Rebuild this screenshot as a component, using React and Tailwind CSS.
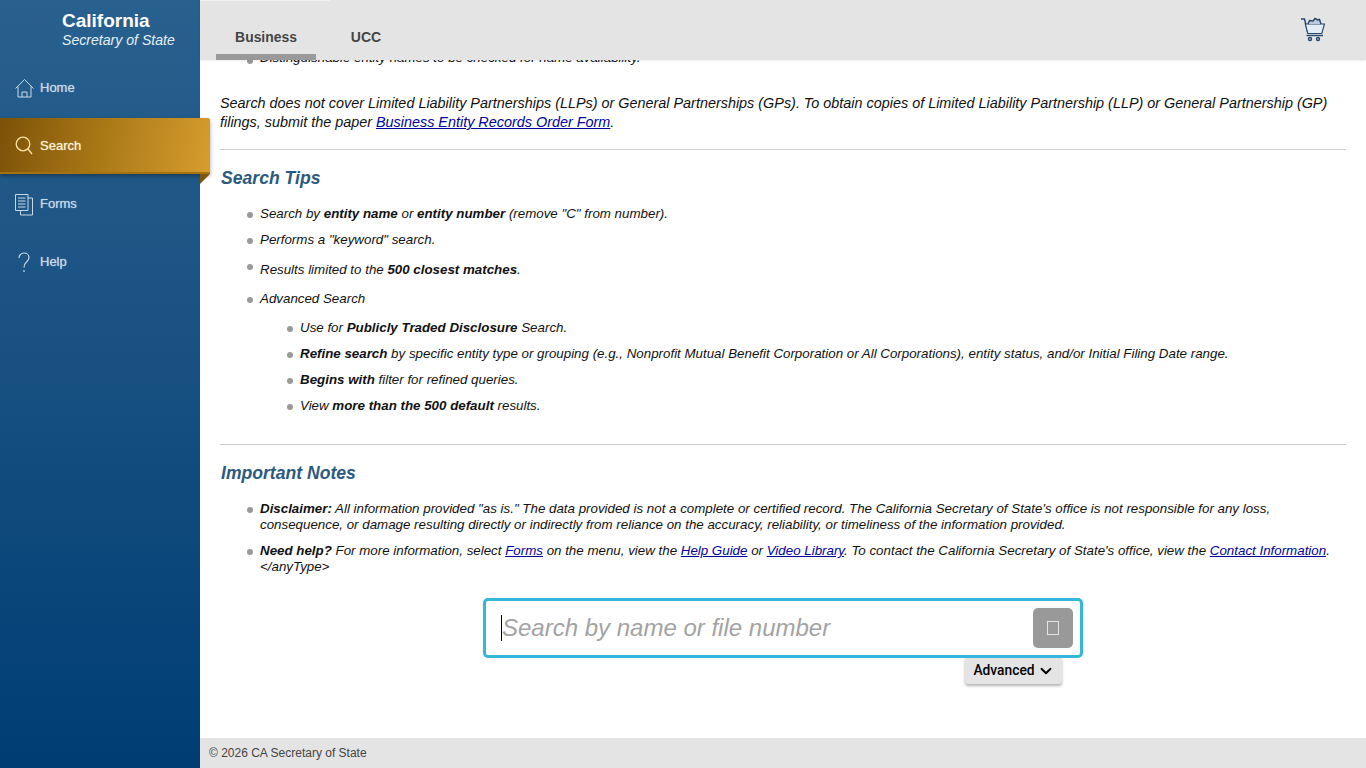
import React from 'react';
import { ChevronDown } from 'lucide-react';

const HomeIcon = () => (
    <svg width="20" height="20" viewBox="0 0 20 20" fill="none" stroke="currentColor" strokeWidth="1">
        <path d="M0.5 10.5 9.5 1.5l9 9" />
        <path d="M3 8.5v10.5h13V8.5" />
        <path d="M7 19v-5h5v5" />
    </svg>
);

const SearchIcon = () => (
    <svg width="20" height="20" viewBox="0 0 20 20" fill="none" stroke="currentColor" strokeWidth="1.3">
        <circle cx="8" cy="8" r="6.8" />
        <path d="M13 13 17 18" />
    </svg>
);

const FormsIcon = () => (
    <svg width="20" height="22" viewBox="0 0 20 22" fill="none" stroke="currentColor" strokeWidth="1">
        <path d="M0.5 0.5h12.5v16H0.5z" />
        <path d="M13 4h4.5v17H5.5v-4.5" />
        <path d="M3 4h7.5M3 7h7.5M3 10h7.5M3 13h7.5" />
    </svg>
);

const HelpIcon = () => (
    <svg width="20" height="22" viewBox="0 0 20 22" fill="none" stroke="currentColor" strokeWidth="1.2">
        <path d="M4 6c0-3 2.2-5 5-5s5 2 5 4.6c0 2-1 3.100-2.500 4.400S9 12.500 9 15.500" />
        <path d="M9 18v2" />
    </svg>
);

const CartIcon = () => (
    <svg width="26" height="28" viewBox="0 0 26 28" fill="none" stroke="#24466b" strokeWidth="1.4">
        <path d="M1 3h3.500l3.500 14.500" />
        <path d="M5.300 8H24.500l-2.700 9.500H7.800z" fill="#e3edf5" strokeWidth="1.100" />
        <path d="M8 8l1.500-3.500 3.500 0.500 2-2.500 3 1.500 1.500-0.500 1.500 4.500" fill="#b9c9da" />
        <path d="M6.500 19.500H23" />
        <circle cx="10" cy="23" r="1.500" />
        <circle cx="18" cy="23" r="1.500" />
    </svg>
);

const NavItem = ({ label, icon, active = false }) => {
    if (active) {
        return (
            <div className="relative h-[58px]">
                <div className="absolute left-0 top-0 w-[210px] h-[56px] rounded-tr-[2px] border-b-2 border-[#a8720f] flex items-center pl-[15px] pt-[2px] gap-[5px] bg-[linear-gradient(100deg,#7c5208,#ab7a17_50%,#d69c2e)] shadow-[0_2px_4px_rgba(0,0,0,0.35)] z-10">
                    <span className="w-[20px] h-[20px] text-[#fbe3a8]">{icon}</span>
                    <span className="text-[13px] text-[#fbf1d8] [text-shadow:0_0_1px_rgba(255,245,220,0.8)]">{label}</span>
                </div>
                <div className="absolute left-[200px] top-[56px] w-0 h-0 border-t-[10px] border-r-[10px] border-t-[#7c5610] border-r-transparent z-10" />
            </div>
        );
    }
    return (
        <div className="h-[58px] flex items-center pl-[15px] gap-[5px] text-[#c9d9e8] pb-[2px]">
            <span className="w-[20px] h-[20px]">{icon}</span>
            <span className="text-[13px] [text-shadow:0_0_1px_rgba(220,235,250,0.7)]">{label}</span>
        </div>
    );
};

const Bullet = ({ children, className = '', dot = 'top-[8px]' }) => (
    <li className={`relative pl-[40px] ${className}`}>
        <span className={`absolute left-[27px] ${dot} w-[6px] h-[6px] rounded-full bg-[#999999]`} />
        {children}
    </li>
);

const SubBullet = ({ children, className = '' }) => (
    <li className={`relative pl-[80px] ${className}`}>
        <span className="absolute left-[67px] top-[6px] w-[6px] h-[6px] rounded-full bg-[#999999]" />
        {children}
    </li>
);

const A = ({ children }) => <a href="#" className="text-[#0000a0] underline">{children}</a>;

const App = () => {
    return (
        <div className="h-screen flex overflow-hidden bg-white font-['Liberation_Sans',Arial,sans-serif]">
            <aside className="w-[200px] shrink-0 bg-gradient-to-b from-[#28618e] via-[#1c5585] via-35% to-[#003d73]">
                <div className="h-[60px] pl-[62px] pt-[10px] text-white">
                    <div className="text-[19px] leading-[22px] font-bold">California</div>
                    <div className="text-[14.1px] leading-[16px] italic text-[#e6eef5]">Secretary of State</div>
                </div>
                <nav>
                    <NavItem label="Home" icon={<HomeIcon />} />
                    <NavItem label="Search" icon={<SearchIcon />} active />
                    <NavItem label="Forms" icon={<FormsIcon />} />
                    <NavItem label="Help" icon={<HelpIcon />} />
                </nav>
            </aside>

            <div className="flex-1 min-w-0 flex flex-col">
                <header className="relative z-[5] h-[60px] shrink-0 bg-[#e4e4e4] flex items-start pl-[16px] pr-[40px] shadow-[0_1px_2px_rgba(0,0,0,0.08)]">
                    <div className="absolute left-0 top-0 w-[130px] h-[1px] bg-[#f0f0f0]" />
                    <div className="w-[100px] h-[60px] flex flex-col">
                        <div className="h-[54px] pt-[28px] text-center text-[13.9px] leading-[18px] font-bold text-[#444444]">Business</div>
                        <div className="w-full h-[6px] bg-[#999999]" />
                    </div>
                    <div className="w-[100px] h-[60px] pt-[28px] text-center text-[14px] leading-[18px] font-bold text-[#444444]">UCC</div>
                    <div className="ml-auto mt-[16px]">
                        <CartIcon />
                    </div>
                </header>

                <main className="relative flex-1 min-h-0 overflow-hidden">
                    <div className="pl-[20px] pr-[20px] text-[14.4px] italic text-[#111111] mt-[-10px]">
                        <ul className="text-[13.33px] leading-[16px]">
                            <Bullet>Distinguishable entity names to be checked for name availability.</Bullet>
                        </ul>

                        <p className="mt-[28px] leading-[19px]">
                            Search does not cover Limited Liability Partnerships (LLPs) or General Partnerships (GPs). To obtain copies of Limited Liability Partnership (LLP) or General Partnership (GP) filings, submit the paper <A>Business Entity Records Order Form</A>.
                        </p>

                        <hr className="mt-[17px] border-[#cccccc]" />
                        <h2 className="mt-[17px] pl-[1px] text-[17.6px] leading-[22px] font-bold text-[#2b5a80]">Search Tips</h2>

                        <ul className="mt-[17px] text-[13.33px] leading-[16px]">
                            <Bullet dot="top-[6px]">Search by <b>entity name</b> or <b>entity number</b> (remove "C" from number).</Bullet>
                            <Bullet className="mt-[10px]" dot="top-[6px]">Performs a "keyword" search.</Bullet>
                            <Bullet className="mt-[14px]" dot="top-[2px]">Results limited to the <b>500 closest matches</b>.</Bullet>
                            <Bullet className="mt-[13px]" dot="top-[6px]">Advanced Search</Bullet>
                        </ul>
                        <ul className="mt-[13px] text-[13.33px] leading-[16px]">
                            <SubBullet>Use for <b>Publicly Traded Disclosure</b> Search.</SubBullet>
                            <SubBullet className="mt-[10px]">
                                <b>Refine search</b> by specific entity type or grouping (e.g., Nonprofit Mutual Benefit Corporation or All Corporations), entity status, and/or Initial Filing Date range.
                            </SubBullet>
                            <SubBullet className="mt-[10px]"><b>Begins with</b> filter for refined queries.</SubBullet>
                            <SubBullet className="mt-[10px]">View <b>more than the 500 default</b> results.</SubBullet>
                        </ul>

                        <hr className="mt-[30px] border-[#cccccc]" />
                        <h2 className="mt-[17px] pl-[1px] text-[17.6px] leading-[22px] font-bold text-[#2b5a80]">Important Notes</h2>

                        <ul className="mt-[17px] text-[13.33px] leading-[16px]">
                            <Bullet dot="top-[6px]">
                                <b>Disclaimer:</b> All information provided "as is." The data provided is not a complete or certified record. The California Secretary of State's office is not responsible for any loss, consequence, or damage resulting directly or indirectly from reliance on the accuracy, reliability, or timeliness of the information provided.
                            </Bullet>
                            <Bullet className="mt-[10px]" dot="top-[6px]">
                                <b>Need help?</b> For more information, select <A>Forms</A> on the menu, view the <A>Help Guide</A> or <A>Video Library</A>. To contact the California Secretary of State's office, view the <A>Contact Information</A>. &lt;/anyType&gt;
                            </Bullet>
                        </ul>

                        <div className="mt-[23px] w-[600px] ml-[263px]">
                            <div className="h-[60px] border-[3px] border-[#34b7dc] rounded-[5px] bg-white flex items-center pl-[15px] pr-[7px] shadow-[0_0_4px_rgba(0,0,0,0.05)]">
                                <div className="w-[1px] h-[26px] bg-black" />
                                <div className="flex-1 text-[24px] leading-[28px] text-[#a3a3a3]">Search by name or file number</div>
                                <div className="w-[40px] h-[40px] rounded-[5px] bg-[#999999] flex items-center justify-center">
                                    <span className="w-[12px] h-[14px] border border-[#e4e4e4]" />
                                </div>
                            </div>
                            <div className="flex justify-end pr-[21px]">
                                <div className="w-[97px] h-[26px] pb-[1px] pl-[1px] bg-[#e4e4e4] rounded-b-[3px] shadow-[0_2px_3px_rgba(0,0,0,0.3)] not-italic flex items-center justify-center gap-[2px] text-[13.8px] font-medium text-black font-['Roboto',sans-serif]">
                                    Advanced <ChevronDown size={18} strokeWidth={2.5} />
                                </div>
                            </div>
                        </div>
                    </div>
                </main>

                <footer className="h-[30px] shrink-0 bg-[#e4e4e4] flex items-center pl-[9px] text-[12px] text-[#444444]">© 2026 CA Secretary of State</footer>
            </div>
        </div>
    );
};

export default App;
